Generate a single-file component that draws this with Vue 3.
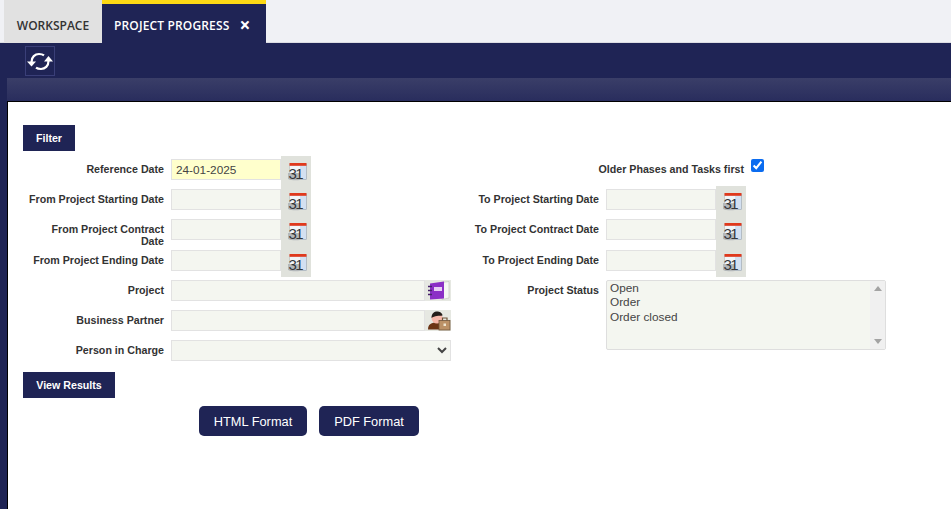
<script setup>
const rows = [
  { left: 'Reference Date', value: '24-01-2025', required: true, right: 'Older Phases and Tasks first', check: true },
  { left: 'From Project Starting Date', right: 'To Project Starting Date' },
  { left: 'From Project Contract Date', right: 'To Project Contract Date', tall: true },
  { left: 'From Project Ending Date', right: 'To Project Ending Date' },
]
</script>

<template>
  <div class="page">
    <nav class="tabs">
      <div class="tab">WORKSPACE</div>
      <div class="tab active">PROJECT PROGRESS<span class="close">×</span></div>
    </nav>
    <div class="toolbar">
      <button class="refresh" aria-label="Refresh">
        <svg width="28" height="28" viewBox="1 1 28 28" fill="none">
          <path d="M6.500 16C6.500 11 10 8 14 8c2.200 0 3.800 .4 5 1.300" stroke="#fff" stroke-width="2.200" />
          <path d="M23.500 15C23.500 20 20 23 16 23c-2.200 0-3.800-.4-5-1.300" stroke="#fff" stroke-width="2.200" />
          <path d="M2 15.500h9L6.500 20.500z" fill="#fff" />
          <path d="M19 15.500h9L23.500 10z" fill="#fff" />
        </svg>
      </button>
    </div>
    <div class="shell">
      <div class="strip"></div>
      <main class="content">
        <button class="section-btn filter">Filter</button>
        <div class="dates">
          <div v-for="r in rows" :key="r.left" class="row" :class="{ tall: r.tall }">
            <label class="lbl narrow">{{ r.left }}</label>
            <div class="date">
              <input class="input" :class="{ req: r.required }" :value="r.value || ''" />
              <span class="cal">
                <svg width="20" height="20" viewBox="0 0 20 20">
                  <rect x="2" y="2" width="16.500" height="15.500" fill="#d3e0f1" stroke="#9aa4ae" stroke-width=".6" />
                  <rect x="2" y="4" width="10" height="9" fill="#f2f5f8" />
                  <rect x="1.500" y="1" width="17" height="2.800" fill="#e0391c" />
                  <path d="M0 11v6c3 1.500 8 1.500 12 1v-7z" fill="#b4b8ba" />
                  <text x="0.500" y="16.500" class="cal-num">31</text>
                </svg>
              </span>
            </div>
            <div v-if="r.check" class="older">
              <label class="lbl">{{ r.right }}</label>
              <input type="checkbox" class="check" checked />
            </div>
            <template v-else>
              <label class="lbl">{{ r.right }}</label>
              <div class="date">
                <input class="input" />
                <span class="cal">
                  <svg width="20" height="20" viewBox="0 0 20 20">
                    <rect x="2" y="2" width="16.500" height="15.500" fill="#d3e0f1" stroke="#9aa4ae" stroke-width=".6" />
                    <rect x="2" y="4" width="10" height="9" fill="#f2f5f8" />
                    <rect x="1.500" y="1" width="17" height="2.800" fill="#e0391c" />
                    <path d="M0 11v6c3 1.500 8 1.500 12 1v-7z" fill="#b4b8ba" />
                    <text x="0.500" y="16.500" class="cal-num">31</text>
                  </svg>
                </span>
              </div>
            </template>
          </div>
        </div>

        <div class="lower">
          <div class="lower-left">
            <div class="row2">
              <label class="lbl">Project</label>
              <div class="search">
                <input class="input grow" />
                <span class="pick">
                  <svg width="26" height="21" viewBox="0 0 26 21">
                    <path d="M17 2.500l7 -1V18l-7 1.500z" fill="#f6f7f4" stroke="#bcbfb6" stroke-width=".6" />
                    <path d="M5 3.500 19 1.500V18.500L5 19.500z" fill="#8b2fc6" />
                    <rect x="9" y="7" width="8" height="4" fill="#e7cdf4" />
                    <path d="M3 6.500h4M3 10.500h4M3 14.500h4" stroke="#45206a" stroke-width="1.400" />
                  </svg>
                </span>
              </div>
            </div>
            <div class="row2">
              <label class="lbl">Business Partner</label>
              <div class="search">
                <input class="input grow" />
                <span class="pick">
                  <svg width="26" height="21" viewBox="0 0 26 21">
                    <path d="M3 19.500c0-5 3-7 8-7s7 2 7 7z" fill="#6b3414" />
                    <circle cx="12" cy="8" r="5.500" fill="#f6b8aa" />
                    <path d="M6.500 8C6.500 3 9.500 1.500 12 1.500s5.500 1.500 5.500 4c-3.500 .5-8 0-11 2.500z" fill="#241e1a" />
                    <rect x="14" y="10.500" width="11" height="9.500" fill="#bb9166" stroke="#70553a" stroke-width=".8" />
                    <path d="M17.500 10.500V8h4.500v2.500" fill="none" stroke="#70553a" stroke-width="1.200" />
                    <rect x="18.500" y="13.500" width="2.500" height="2.500" fill="#f0e6d0" />
                  </svg>
                </span>
              </div>
            </div>
            <div class="row2">
              <label class="lbl">Person in Charge</label>
              <select class="input select"></select>
            </div>
          </div>
          <div class="lower-right">
            <label class="lbl status-lbl">Project Status</label>
            <div class="listbox">
              <div class="options">
                <div>Open</div>
                <div>Order</div>
                <div>Order closed</div>
              </div>
              <div class="scroll">
                <span class="arrow up"></span>
                <span class="arrow down"></span>
              </div>
            </div>
          </div>
        </div>

        <button class="section-btn results">View Results</button>
        <div class="formats">
          <button class="fmt html">HTML Format</button>
          <button class="fmt pdf">PDF Format</button>
        </div>
      </main>
    </div>
  </div>
</template>

<style>
html, body { margin: 0; background: #fff; }
</style>

<style scoped>
* { box-sizing: border-box; }
.page {
  width: 951px;
  height: 509px;
  overflow: hidden;
  display: flex;
  flex-direction: column;
  font-family: "Liberation Sans", Arial, sans-serif;
  background: #1f2455;
}
.tabs {
  height: 43px;
  background: #f0f1f5;
  display: flex;
  padding-left: 4px;
  border-bottom: 1px solid #dcdde3;
}
.tab {
  height: 43px;
  width: 98px;
  background: #e1e1e1;
  color: #333;
  font-family: "Open Sans", sans-serif;
  font-size: 12px;
  font-weight: 600;
  letter-spacing: 0;
  padding-top: 18px;
  line-height: 16px;
  text-align: center;
}
.tab.active {
  width: 164px;
  background: #1f2455;
  color: #fff;
  border-top: 4px solid #fdd915;
  padding-top: 14px;
  padding-left: 12px;
  text-align: left;
  white-space: pre;
  letter-spacing: 0.15px;
}
.close { font-size: 19px; font-weight: 700; margin-left: 10px; line-height: 14px; vertical-align: -2px; }
.toolbar { height: 35px; padding: 3px 0 0 25px; background: #1f2455; }
.refresh {
  width: 30px;
  height: 30px;
  padding: 0;
  border: 1px solid #3a3f78;
  background: #1f2455;
  display: flex;
  align-items: center;
  justify-content: center;
}
.shell { flex: 1; padding-left: 7px; display: flex; flex-direction: column; min-height: 0; }
.strip { height: 23px; background: linear-gradient(#3a3e68, #292d5d); flex: none; }
.content {
  flex: 1;
  background: #fff;
  border-top: 1px solid #000;
  border-left: 1px solid #000;
  padding: 23px 0 0 15px;
  min-height: 0;
}
.section-btn {
  display: block;
  height: 26px;
  background: #1f2455;
  color: #fff;
  border: 0;
  padding: 0;
  font: 700 10.67px "Liberation Sans", Arial, sans-serif;
}
.filter { width: 52px; margin-bottom: 5px; }
.results { width: 92px; margin-top: 5px; }
.dates { display: flex; flex-direction: column; }
.row {
  height: 30px;
  display: grid;
  grid-template-columns: 141px 140px 281px 1fr;
  column-gap: 7px;
  align-items: start;
}
.row.tall { height: 31px; }
.lbl {
  font-size: 10.67px;
  font-weight: 700;
  color: #333;
  text-align: right;
  line-height: 12px;
  padding-top: 7px;
}
.narrow { padding-left: 5px; }
.older {
  grid-column: 3 / -1;
  width: 446px;
  display: flex;
  justify-content: flex-end;
  column-gap: 7px;
}
.date { display: flex; align-items: flex-start; height: 30px; }
.row.tall .date { height: 31px; }
.input {
  width: 110px;
  height: 21px;
  margin-top: 3px;
  border: 1px solid #e2e2e2;
  background: #f4f6f0;
  padding: 0 4px;
  font: 11.8px "Liberation Sans", Arial, sans-serif;
  color: #444;
  outline: 0;
  border-radius: 0;
}
.input.req { background: #ffffcc; }
.cal {
  width: 30px;
  height: 100%;
  padding: 6px 0 0 7px;
  background: #e0e2dc;
  flex: none;
}
.cal svg { display: block; }
.cal-num {
  font: 15px "Liberation Sans", Arial, sans-serif;
  letter-spacing: -1.600px;
  fill: #34373c;
}
.check { width: 13px; height: 13px; margin: 3px 0 0; accent-color: #0b6cf0; }
.lower { display: flex; }
.lower-left { width: 428px; display: flex; flex-direction: column; }
.row2 {
  height: 30px;
  display: grid;
  grid-template-columns: 141px 280px;
  column-gap: 7px;
  align-items: start;
}
.search { display: flex; height: 21px; margin-top: 3px; background: #e6e8e2; }
.grow { flex: 1; width: auto; min-width: 0; margin-top: 0; }
.pick { width: 26px; flex: none; }
.pick svg { display: block; }
.select {
  width: 280px;
  appearance: auto;
  padding: 0;
}
.lower-right { display: flex; column-gap: 7px; align-items: flex-start; }
.status-lbl { width: 148px; }
.listbox {
  width: 280px;
  height: 70px;
  margin-top: 3px;
  border: 1px solid #dedede;
  border-radius: 2px;
  background: #f4f6f0;
  display: flex;
  font-size: 11.8px;
  color: #444;
  line-height: 14.400px;
}
.options { flex: 1; padding: 0 3px; }
.scroll {
  width: 15px;
  background: #f0f0f0;
  display: flex;
  flex-direction: column;
  justify-content: space-between;
  align-items: center;
  padding: 5px 0;
}
.arrow { width: 0; height: 0; border-left: 4px solid transparent; border-right: 4px solid transparent; }
.arrow.up { border-bottom: 5px solid #a3a3a3; }
.arrow.down { border-top: 5px solid #a3a3a3; }
.formats { display: flex; gap: 12px; margin: 8px 0 0 176px; }
.fmt {
  height: 30px;
  border: 0;
  border-radius: 5px;
  background: #1f2455;
  color: #fff;
  padding: 0;
  font: 12.800px "Liberation Sans", Arial, sans-serif;
}
.html { width: 108px; }
.pdf { width: 100px; }
</style>
